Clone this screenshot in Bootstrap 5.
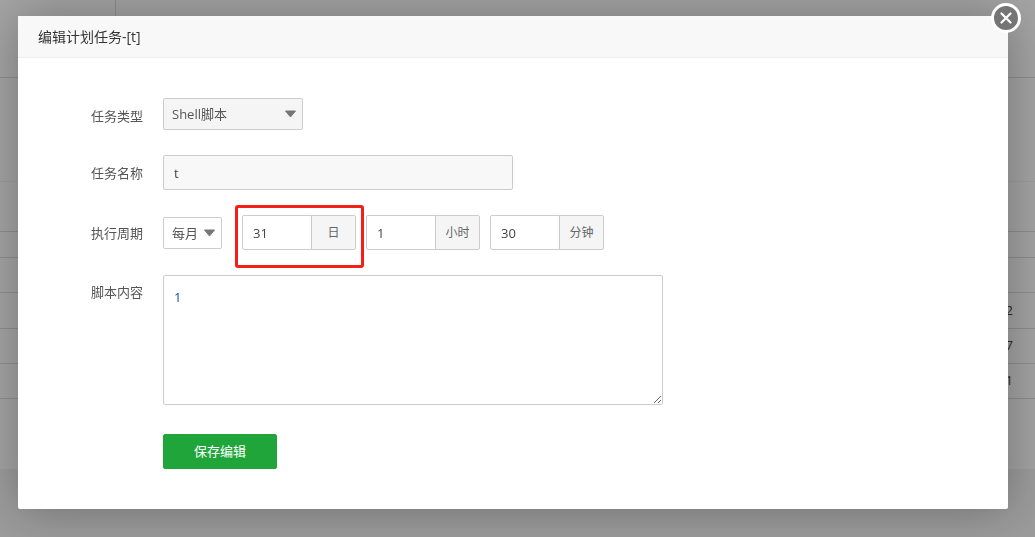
<!DOCTYPE html>
<html lang="zh-CN">
<head>
<meta charset="utf-8">
<title>编辑计划任务</title>
<link href="https://cdn.jsdelivr.net/npm/bootstrap@5.3.0/dist/css/bootstrap.min.css" rel="stylesheet">
<style>
html,body{height:100%;overflow:hidden}
body{background:#f3f3f3;font-family:"Open Sans","Noto Sans CJK SC",sans-serif;font-size:13px;color:#555}
.pg-wrap{background:#fff;height:469px;overflow:hidden}
.pg-row{border-bottom:1px solid #ddd;display:flex;justify-content:flex-end;align-items:center;padding-right:22px;color:#444;font-size:13px}
.pg-h78{height:78px;position:relative}
.pg-h78::after{content:"";width:1px;height:77px;background:#ddd;position:absolute;left:115px;top:0}
.pg-h104{height:104px;border-color:#f4f4f4}
.pg-h50{height:50px}
.pg-h26{height:26px}
.pg-h35{height:35px}
.pg-h36{height:36px}
.shade{position:fixed;inset:0;background:rgba(0,0,0,.36)}
.dlg{position:fixed;left:18px;top:16px;width:990px;height:493px;background:#fff;border-radius:2px;box-shadow:1px 1px 50px rgba(0,0,0,.3)}
.dlg-head{height:42px;background:#f8f8f8;border-bottom:1px solid #eee;padding:0 20px;font-size:14px;line-height:41px;color:#333}
.dlg-body{padding:40px 0 0}
.f-row{display:flex;margin-bottom:25px}
.f-label{width:125px;margin-right:20px;text-align:right;flex:none;color:#555;font-size:13px}
.f-ctrl{display:flex;align-items:center}
.lbl-a{padding-top:9px}
.lbl-b{padding-top:9px}
.lbl-c{padding-top:9px}
.lbl-d{padding-top:8px}
select.pick{height:32px;border:1px solid #ccc;border-radius:2px;padding:0 24px 0 8px;font-size:13px;color:#555;box-shadow:none;line-height:30px;background-position:right 5px center;background-size:13px 8px;background-image:url("data:image/svg+xml,%3Csvg xmlns='http://www.w3.org/2000/svg' viewBox='0 0 13 8'%3E%3Cpath fill='%23777' stroke='%23777' stroke-linejoin='round' d='M1.5 1h10L6.5 7z'/%3E%3C/svg%3E")}
.pick-type{width:140px;background-color:#f5f5f5}
.pick-cycle{width:59px;background-color:#fff}
input.txt{height:35px;border:1px solid #ccc;border-radius:2px;padding:0 10px;font-size:13px;color:#444;box-shadow:none}
.txt-name{width:350px;background:#f8f8f8}
.grp{width:114px;flex-wrap:nowrap;margin-right:10px}
.grp.first{margin-left:20px}
.grp input.txt{width:70px;flex:none}
.grp .input-group-text{flex:1;justify-content:center;height:35px;padding:0;background:#f5f5f5;border:1px solid #ccc;border-radius:0 2px 2px 0;font-size:12px;color:#666}
.code-area{display:block;width:500px;height:130px;border:1px solid #ccc;border-radius:2px;padding:12px 10px 10px;font-size:13px;color:#1a4aa8;resize:both;outline:0}
.save-row{padding-left:145px;margin-top:29px}
.save-btn{width:114px;height:35px;padding:0;background:#20a53a;border:1px solid #20a53a;border-radius:2px;font-size:13px;color:#fff}
.mark-box{position:absolute;left:217px;top:189px;width:129px;height:63px;border:3px solid #f51f17;border-radius:3px;pointer-events:none}
.close-x{position:fixed;left:991px;top:3px;width:30px;height:30px;border-radius:50%;background:#757575;border:3px solid #fff;padding:0;display:flex;align-items:center;justify-content:center}
</style>
</head>
<body>
<div class="pg-wrap">
  <div class="pg-row pg-h78"></div>
  <div class="pg-row pg-h104"></div>
  <div class="pg-row pg-h50"></div>
  <div class="pg-row pg-h26"></div>
  <div class="pg-row pg-h35"></div>
  <div class="pg-row pg-h36">2</div>
  <div class="pg-row pg-h35">7</div>
  <div class="pg-row pg-h35">1</div>
</div>
<div class="shade"></div>
<div class="dlg">
  <div class="dlg-head">编辑计划任务-[t]</div>
  <div class="dlg-body">
    <div class="f-row">
      <div class="f-label lbl-a">任务类型</div>
      <div class="f-ctrl"><select class="form-select pick pick-type"><option>Shell脚本</option></select></div>
    </div>
    <div class="f-row">
      <div class="f-label lbl-b">任务名称</div>
      <div class="f-ctrl"><input class="form-control txt txt-name" value="t"></div>
    </div>
    <div class="f-row">
      <div class="f-label lbl-c">执行周期</div>
      <div class="f-ctrl">
        <select class="form-select pick pick-cycle"><option>每月</option></select>
        <div class="input-group grp first"><input class="form-control txt" value="31"><span class="input-group-text">日</span></div>
        <div class="input-group grp"><input class="form-control txt" value="1"><span class="input-group-text">小时</span></div>
        <div class="input-group grp"><input class="form-control txt" value="30"><span class="input-group-text">分钟</span></div>
      </div>
    </div>
    <div class="f-row mb-0">
      <div class="f-label lbl-d">脚本内容</div>
      <div class="f-ctrl"><textarea class="code-area">1</textarea></div>
    </div>
    <div class="save-row"><button type="button" class="btn save-btn">保存编辑</button></div>
  </div>
  <div class="mark-box"></div>
</div>
<button type="button" class="close-x" aria-label="关闭"><svg width="12" height="12" viewBox="0 0 12 12"><path d="M1.5 1.5l9 9M10.5 1.5l-9 9" stroke="#fff" stroke-width="2.2" stroke-linecap="round"/></svg></button>
<script src="https://cdn.jsdelivr.net/npm/bootstrap@5.3.0/dist/js/bootstrap.bundle.min.js"></script>
</body>
</html>
